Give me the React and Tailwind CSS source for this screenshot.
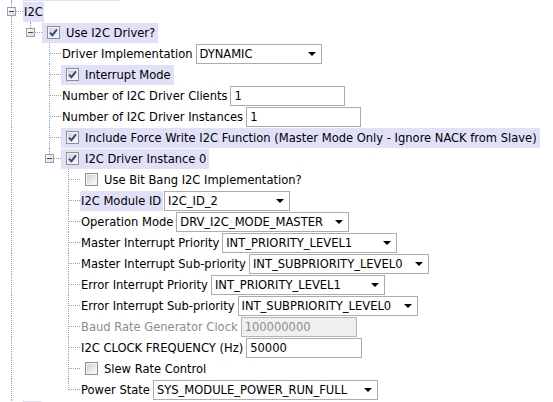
const HL = 'bg-[#e0e0f8]';
const LINE = 'border-[#a0a0a0] border-dotted';

function Expander() {
  return (
    <svg width="9" height="9" viewBox="0 0 9 9" className="block shrink-0">
      <defs>
        <linearGradient id="exg" x1="0" y1="0" x2="1" y2="1">
          <stop offset="0" stopColor="#ffffff" />
          <stop offset="1" stopColor="#d6d9de" />
        </linearGradient>
      </defs>
      <rect x="0.5" y="0.5" width="8" height="8" fill="url(#exg)" stroke="#97a1ae" />
      <line x1="2" y1="4.5" x2="7" y2="4.5" stroke="#3b4a66" />
    </svg>
  );
}

function Checkbox({ checked }) {
  return (
    <svg width="13" height="13" viewBox="0 0 13 13" className="block shrink-0">
      <defs>
        <linearGradient id="cbg" x1="0" y1="0" x2="1" y2="1">
          <stop offset="0" stopColor="#cfd0d2" />
          <stop offset="1" stopColor="#fafafa" />
        </linearGradient>
      </defs>
      <rect x="0.5" y="0.5" width="12" height="12" fill="#f4f4f4" stroke="#8e8f8f" />
      <rect x="2" y="2" width="9" height="9" fill="url(#cbg)" />
      {checked && (
        <path d="M3 6.6 L5.4 9.2 L10 3.4" fill="none" stroke="#2c4a92" strokeWidth="1.9" />
      )}
    </svg>
  );
}

// one 19px guide column of the tree
function Guide({ type }) {
  if (type === ' ') return <div className="w-[19px] shrink-0" />;
  if (type === 'E0' || type === 'EL') {
    return (
      <div className="w-[19px] h-full shrink-0 flex">
        <div className="w-[3px]" />
        <div className="flex flex-col items-center w-[9px]">
          <div className={`flex-1 border-l ${LINE}`} />
          <Expander />
          <div className={`flex-1 ${type === 'E0' ? `border-l ${LINE}` : ''}`} />
        </div>
        <div className="flex-1 flex items-center">
          <div className={`w-full border-t ${LINE}`} />
        </div>
      </div>
    );
  }
  return (
    <div className="w-[19px] h-full shrink-0 flex">
      <div className="w-[7px]" />
      <div className={`w-px border-l ${LINE} ${type === 'L' ? 'h-[11px]' : 'h-full'}`} />
      {type !== 'I' && (
        <div className="flex-1 flex items-center">
          <div className={`w-full border-t ${LINE}`} />
        </div>
      )}
    </div>
  );
}

function Arrow() {
  return (
    <svg width="8" height="4" viewBox="0 0 8 4" className="block ml-auto mr-[5px] shrink-0">
      <path d="M0 0 H8 L4 4 Z" fill="#000" />
    </svg>
  );
}

function Field({ f }) {
  const base = 'h-[20px] border flex items-center pl-[3px] shrink-0';
  if (f.type === 'select') {
    return (
      <div className={`${base} border-[#acacac] bg-white`} style={{ width: f.w }}>
        <span>{f.value}</span>
        <Arrow />
      </div>
    );
  }
  return (
    <div
      className={`${base} ${f.disabled ? 'border-[#b4b4b4] bg-[#f0f0f0] text-[#8d8d8d]' : 'border-[#acacac] bg-white'}`}
      style={{ width: f.w }}
    >
      {f.value}
    </div>
  );
}

const L2 = ['I', ' ', 'T'];
const L3 = ['I', ' ', ' ', 'T'];

const rows = [
  { g: ['E0'], text: 'I2C', hl: true, lw: 21 },
  { g: ['I', 'EL'], check: true, checked: true, text: 'Use I2C Driver?', hl: true },
  { g: L2, text: 'Driver Implementation', field: { type: 'select', value: 'DYNAMIC', w: 126 } },
  { g: L2, check: true, checked: true, text: 'Interrupt Mode', hl: true },
  { g: L2, text: 'Number of I2C Driver Clients', field: { type: 'input', value: '1', w: 115 } },
  { g: L2, text: 'Number of I2C Driver Instances', field: { type: 'input', value: '1', w: 115 } },
  {
    g: L2,
    check: true,
    checked: true,
    text: 'Include Force Write I2C Function (Master Mode Only - Ignore NACK from Slave)',
    hl: true,
  },
  { g: ['I', ' ', 'EL'], check: true, checked: true, text: 'I2C Driver Instance 0', hl: true },
  { g: L3, check: true, checked: false, text: 'Use Bit Bang I2C Implementation?' },
  { g: L3, text: 'I2C Module ID', hl: true, lw: 83, field: { type: 'select', value: 'I2C_ID_2', w: 126 } },
  { g: L3, text: 'Operation Mode', field: { type: 'select', value: 'DRV_I2C_MODE_MASTER', w: 173 } },
  { g: L3, text: 'Master Interrupt Priority', field: { type: 'select', value: 'INT_PRIORITY_LEVEL1', w: 175 } },
  {
    g: L3,
    text: 'Master Interrupt Sub-priority',
    field: { type: 'select', value: 'INT_SUBPRIORITY_LEVEL0', w: 180 },
  },
  { g: L3, text: 'Error Interrupt Priority', field: { type: 'select', value: 'INT_PRIORITY_LEVEL1', w: 174 } },
  {
    g: L3,
    text: 'Error Interrupt Sub-priority',
    field: { type: 'select', value: 'INT_SUBPRIORITY_LEVEL0', w: 180 },
  },
  {
    g: L3,
    text: 'Baud Rate Generator Clock',
    disabled: true,
    field: { type: 'input', value: '100000000', w: 116, disabled: true },
  },
  { g: L3, text: 'I2C CLOCK FREQUENCY (Hz)', field: { type: 'input', value: '50000', w: 116 } },
  { g: L3, check: true, checked: false, text: 'Slew Rate Control' },
  {
    g: ['I', ' ', ' ', 'L'],
    text: 'Power State',
    field: { type: 'select', value: 'SYS_MODULE_POWER_RUN_FULL', w: 225 },
  },
];

function Row({ r }) {
  return (
    <div className="h-[21px] flex items-center">
      {r.g.map((t, i) => (
        <Guide key={i} type={t} />
      ))}
      {r.check ? (
        <div className={`h-[20px] flex items-center pl-[5px] pr-[3px] ${r.hl ? HL : ''}`}>
          <Checkbox checked={r.checked} />
          <span className="ml-[6px]">{r.text}</span>
        </div>
      ) : (
        <>
          <div
            className={`h-[20px] flex items-center pl-[1px] pr-[2px] ${r.hl ? HL : ''} ${r.disabled ? 'text-[#8d8d8d]' : ''}`}
            style={r.lw ? { width: r.lw } : undefined}
          >
            {r.text}
          </div>
          {r.field && (
            <div className="ml-[1px]">
              <Field f={r.field} />
            </div>
          )}
        </>
      )}
    </div>
  );
}

export default function App() {
  return (
    <div
      className="w-[553px] h-[402px] overflow-hidden bg-white text-black text-[12.8px] whitespace-nowrap pl-[4px]"
      style={{ fontFamily: '"DejaVu Sans Condensed", "DejaVu Sans", sans-serif' }}
    >
      <div className="h-px flex">
        <Guide type="I" />
        <div className={`w-[97px] ${HL}`} />
      </div>
      {rows.map((r, i) => (
        <Row key={i} r={r} />
      ))}
      <div className="h-[21px] flex items-center">
        <Guide type="T" />
        <div className={`h-[20px] w-[19px] ${HL}`} />
      </div>
    </div>
  );
}
